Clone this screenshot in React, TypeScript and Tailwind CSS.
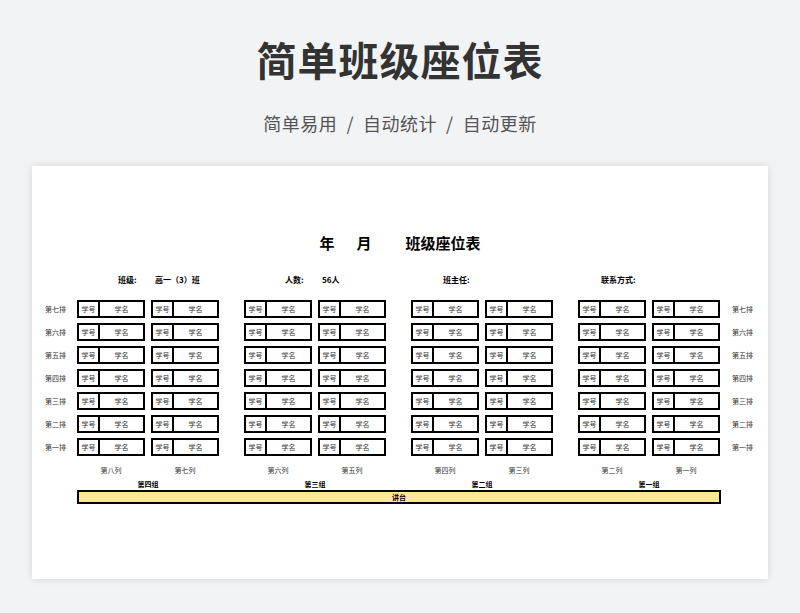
const rows = ["第七排", "第六排", "第五排", "第四排", "第三排", "第二排", "第一排"];
const cols = [["第八列", "第七列"], ["第六列", "第五列"], ["第四列", "第三列"], ["第二列", "第一列"]];
const groups = ["第四组", "第三组", "第二组", "第一组"];
const F = { fontFamily: '"Noto Sans CJK SC", "Noto Sans", sans-serif' };

function Seat() {
  return (
    <div className="w-[68px] h-[18px] border-2 border-black flex items-center text-[7px] text-[#333]">
      <div className="w-[21px] h-full border-r-2 border-black flex items-center justify-center">学号</div>
      <div className="flex-1 text-center">学名</div>
    </div>
  );
}

export default function App() {
  return (
    <div className="w-[800px] h-[613px] bg-[#f2f3f5] flex flex-col items-center" style={F}>
      <div className="mt-[33px] text-[40px] leading-[52px] font-bold text-[#333] tracking-[1px]">简单班级座位表</div>
      <div className="mt-[26px] text-[18px] leading-[24px] text-[#555] tracking-[0.5px]">简单易用&nbsp;&nbsp;/&nbsp;&nbsp;自动统计&nbsp;&nbsp;/&nbsp;&nbsp;自动更新</div>
      <div className="mt-[31px] w-[736px] h-[413px] bg-white shadow-[0_0_8px_rgba(0,0,0,0.12)] px-[13px] pt-[66px]">
        <div className="flex justify-center text-[15px] font-bold leading-[22px] text-black">
          <span>年</span><span className="ml-[22px]">月</span><span className="ml-[34px]">班级座位表</span>
        </div>
        <div className="relative h-[14px] mt-[20px] text-[8px] font-bold text-black">
          <span className="absolute left-[73px]">班级:</span>
          <span className="absolute left-[110px]">高一（3）班</span>
          <span className="absolute left-[240px]">人数:</span>
          <span className="absolute left-[277px]">56人</span>
          <span className="absolute left-[398px]">班主任:</span>
          <span className="absolute left-[556px]">联系方式:</span>
        </div>
        <div className="mt-[12px] flex flex-col gap-[5px]">
          {rows.map((r) => (
            <div key={r} className="flex items-center">
              <div className="w-[32px] text-[7px] text-[#333]">{r}</div>
              <div className="flex gap-[25px]">
                {groups.map((g) => (
                  <div key={g} className="flex gap-[6px]"><Seat /><Seat /></div>
                ))}
              </div>
              <div className="ml-[12px] text-[7px] text-[#333]">{r}</div>
            </div>
          ))}
        </div>
        <div className="ml-[32px] flex gap-[25px] mt-[9px] text-[7px] text-[#333]">
          {cols.map((c) => (
            <div key={c[0]} className="flex gap-[6px]">
              <div className="w-[68px] text-center">{c[0]}</div>
              <div className="w-[68px] text-center">{c[1]}</div>
            </div>
          ))}
        </div>
        <div className="ml-[32px] flex gap-[25px] mt-[3px] text-[7px] font-bold text-black">
          {groups.map((g) => (
            <div key={g} className="w-[142px] text-center">{g}</div>
          ))}
        </div>
        <div className="ml-[32px] w-[644px] h-[14px] mt-[1px] bg-[#ffe699] border-2 border-black flex items-center justify-center text-[7px] font-bold">讲台</div>
      </div>
    </div>
  );
}
